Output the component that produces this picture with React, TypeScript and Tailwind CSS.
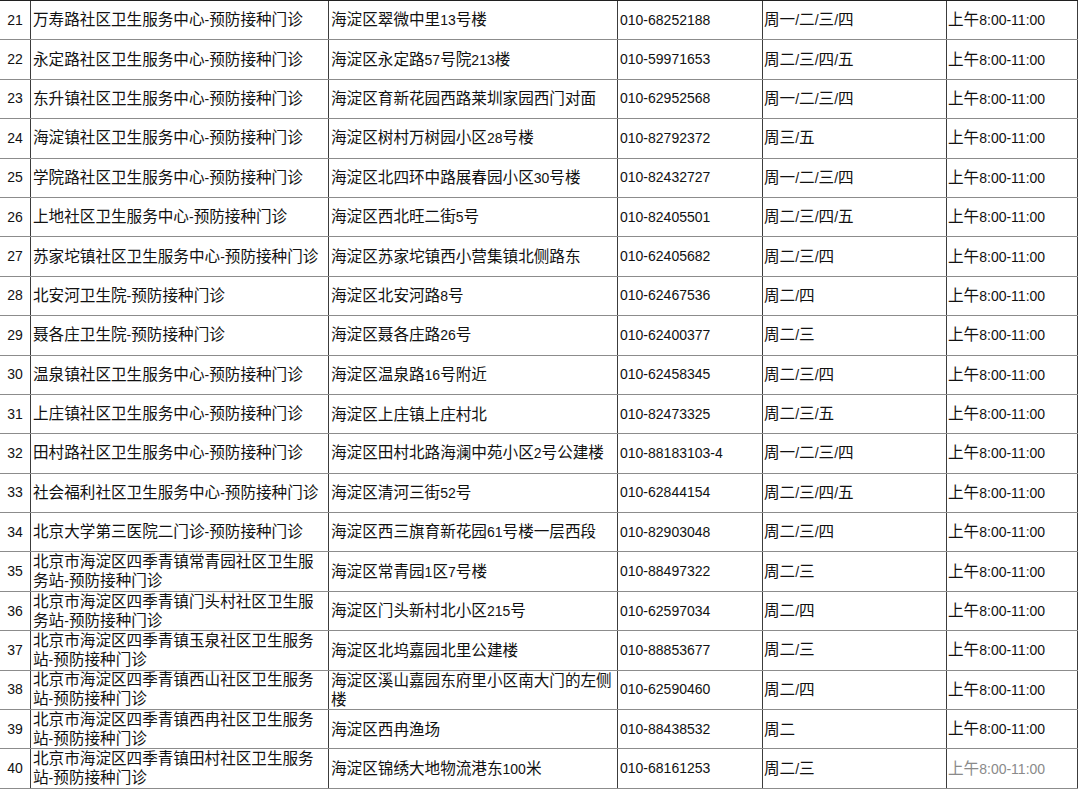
import React from "react";

type Row = [string, string, string, string, string];

const rows: Row[] = [
  ["21", "万寿路社区卫生服务中心-预防接种门诊", "海淀区翠微中里13号楼", "010-68252188", "周一/二/三/四"],
  ["22", "永定路社区卫生服务中心-预防接种门诊", "海淀区永定路57号院213楼", "010-59971653", "周二/三/四/五"],
  ["23", "东升镇社区卫生服务中心-预防接种门诊", "海淀区育新花园西路莱圳家园西门对面", "010-62952568", "周一/二/三/四"],
  ["24", "海淀镇社区卫生服务中心-预防接种门诊", "海淀区树村万树园小区28号楼", "010-82792372", "周三/五"],
  ["25", "学院路社区卫生服务中心-预防接种门诊", "海淀区北四环中路展春园小区30号楼", "010-82432727", "周一/二/三/四"],
  ["26", "上地社区卫生服务中心-预防接种门诊", "海淀区西北旺二街5号", "010-82405501", "周二/三/四/五"],
  ["27", "苏家坨镇社区卫生服务中心-预防接种门诊", "海淀区苏家坨镇西小营集镇北侧路东", "010-62405682", "周二/三/四"],
  ["28", "北安河卫生院-预防接种门诊", "海淀区北安河路8号", "010-62467536", "周二/四"],
  ["29", "聂各庄卫生院-预防接种门诊", "海淀区聂各庄路26号", "010-62400377", "周二/三"],
  ["30", "温泉镇社区卫生服务中心-预防接种门诊", "海淀区温泉路16号附近", "010-62458345", "周二/三/四"],
  ["31", "上庄镇社区卫生服务中心-预防接种门诊", "海淀区上庄镇上庄村北", "010-82473325", "周二/三/五"],
  ["32", "田村路社区卫生服务中心-预防接种门诊", "海淀区田村北路海澜中苑小区2号公建楼", "010-88183103-4", "周一/二/三/四"],
  ["33", "社会福利社区卫生服务中心-预防接种门诊", "海淀区清河三街52号", "010-62844154", "周二/三/四/五"],
  ["34", "北京大学第三医院二门诊-预防接种门诊", "海淀区西三旗育新花园61号楼一层西段", "010-82903048", "周二/三/四"],
  ["35", "北京市海淀区四季青镇常青园社区卫生服\n务站-预防接种门诊", "海淀区常青园1区7号楼", "010-88497322", "周二/三"],
  ["36", "北京市海淀区四季青镇门头村社区卫生服\n务站-预防接种门诊", "海淀区门头新村北小区215号", "010-62597034", "周二/四"],
  ["37", "北京市海淀区四季青镇玉泉社区卫生服务\n站-预防接种门诊", "海淀区北坞嘉园北里公建楼", "010-88853677", "周二/三"],
  ["38", "北京市海淀区四季青镇西山社区卫生服务\n站-预防接种门诊", "海淀区溪山嘉园东府里小区南大门的左侧\n楼", "010-62590460", "周二/四"],
  ["39", "北京市海淀区四季青镇西冉社区卫生服务\n站-预防接种门诊", "海淀区西冉渔场", "010-88438532", "周二"],
  ["40", "北京市海淀区四季青镇田村社区卫生服务\n站-预防接种门诊", "海淀区锦绣大地物流港东100米", "010-68161253", "周二/三"],
];

// ascii runs are set a bit smaller, like the original mixed-font rendering
function Mixed({ text }: { text: string }) {
  const lines = text.split("\n");
  return (
    <>
      {lines.map((line, li) => (
        <div key={li} className="whitespace-nowrap">
          {line.split(/([\x00-\x7f]+)/).map((part, i) =>
            /^[\x00-\x7f]+$/.test(part) ? (
              <span key={i} className="text-[14px]">{part}</span>
            ) : (
              <span key={i}>{part}</span>
            )
          )}
        </div>
      ))}
    </>
  );
}

function Cell({ className, children }: { className: string; children: React.ReactNode }) {
  return (
    <div className={"flex h-full flex-col justify-center overflow-visible border-r border-[#3c3c3c] " + className}>
      {children}
    </div>
  );
}

export default function App() {
  return (
    <div className="h-[790px] w-[1080px] overflow-hidden bg-white">
      <div
        className="w-[1078px] border-t border-[#202020] text-[15.6px] leading-[19px] text-[#111]"
        style={{ fontFamily: '"Liberation Sans", "Noto Sans CJK SC", sans-serif' }}
      >
        {rows.map((r, idx) => (
          <div key={r[0]} className="flex h-[39.4px] border-b border-[#8c8c8c]">
            <Cell className="w-[31px] items-center">
              <span className="text-[14px]">{r[0]}</span>
            </Cell>
            <Cell className="w-[298px] pl-[2px]">
              <Mixed text={r[1]} />
            </Cell>
            <Cell className="w-[289px] pl-[2px]">
              <Mixed text={r[2]} />
            </Cell>
            <Cell className="w-[145px] pl-[2px]">
              <span className="text-[14px]">{r[3]}</span>
            </Cell>
            <Cell className="w-[184px] pl-[1px]">
              <Mixed text={r[4]} />
            </Cell>
            <Cell className={"w-[131px] pl-[1px] " + (idx === rows.length - 1 ? "text-[#8a8a8a]" : "")}>
              <Mixed text="上午8:00-11:00" />
            </Cell>
          </div>
        ))}
      </div>
    </div>
  );
}
